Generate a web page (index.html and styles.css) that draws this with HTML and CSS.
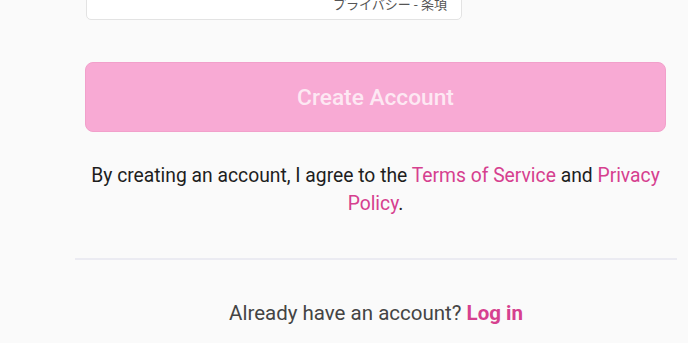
FILE: index.html
```html
<!DOCTYPE html>
<html lang="en">
<head>
<meta charset="utf-8">
<link rel="stylesheet" href="styles.css">
</head>
<body>
<div class="page">
  <div class="form">
    <div class="field">
      <span class="field-text">プライバシー - 条項</span>
    </div>
    <button class="submit" type="button">Create Account</button>
    <p class="terms">By creating an account, I agree to the <a href="#">Terms of Service</a> and <a href="#">Privacy Policy</a>.</p>
  </div>
  <hr class="divider">
  <p class="login">Already have an account? <a href="#">Log in</a></p>
</div>
</body>
</html>
```
FILE: styles.css
```css
html, body {
  margin: 0;
  padding: 0;
  background: #fafafa;
  font-family: Roboto, "Noto Sans CJK JP", sans-serif;
  overflow: hidden;
}
.page {
  width: 602px;
  margin-left: 75px;
  margin-top: -22px;
}
.form {
  padding: 0 11px 0 10px;
  display: flex;
  flex-direction: column;
}
.field {
  width: 376px;
  height: 42px;
  box-sizing: border-box;
  margin-left: 1px;
  background: #fff;
  border: 1px solid #e3e3e3;
  border-radius: 5px;
  display: flex;
  justify-content: flex-end;
  align-items: flex-start;
  padding: 16px 14px 0 0;
}
.field-text {
  font-size: 13px;
  line-height: 18px;
  color: #555;
  font-family: "Noto Sans CJK JP", sans-serif;
}
.submit {
  margin-top: 42px;
  height: 70px;
  border: 1px solid #f2a0cb;
  border-radius: 8px;
  background: #f8aad4;
  color: #fde8f3;
  font-family: Roboto, sans-serif;
  font-size: 22.7px;
  font-weight: 500;
  cursor: pointer;
}
.terms {
  margin: 30px 0 0;
  text-align: center;
  font-size: 19.3px;
  line-height: 28px;
  color: #1e1e1e;
}
.terms a, .login a {
  color: #d6408f;
  text-decoration: none;
}
.divider {
  margin: 40px 0 0;
  border: 0;
  height: 2px;
  background: #ebebf2;
}
.login {
  margin: 40px 0 0;
  text-align: center;
  font-size: 20.5px;
  line-height: 26px;
  color: #444;
}
.login a {
  font-weight: 700;
}
```
